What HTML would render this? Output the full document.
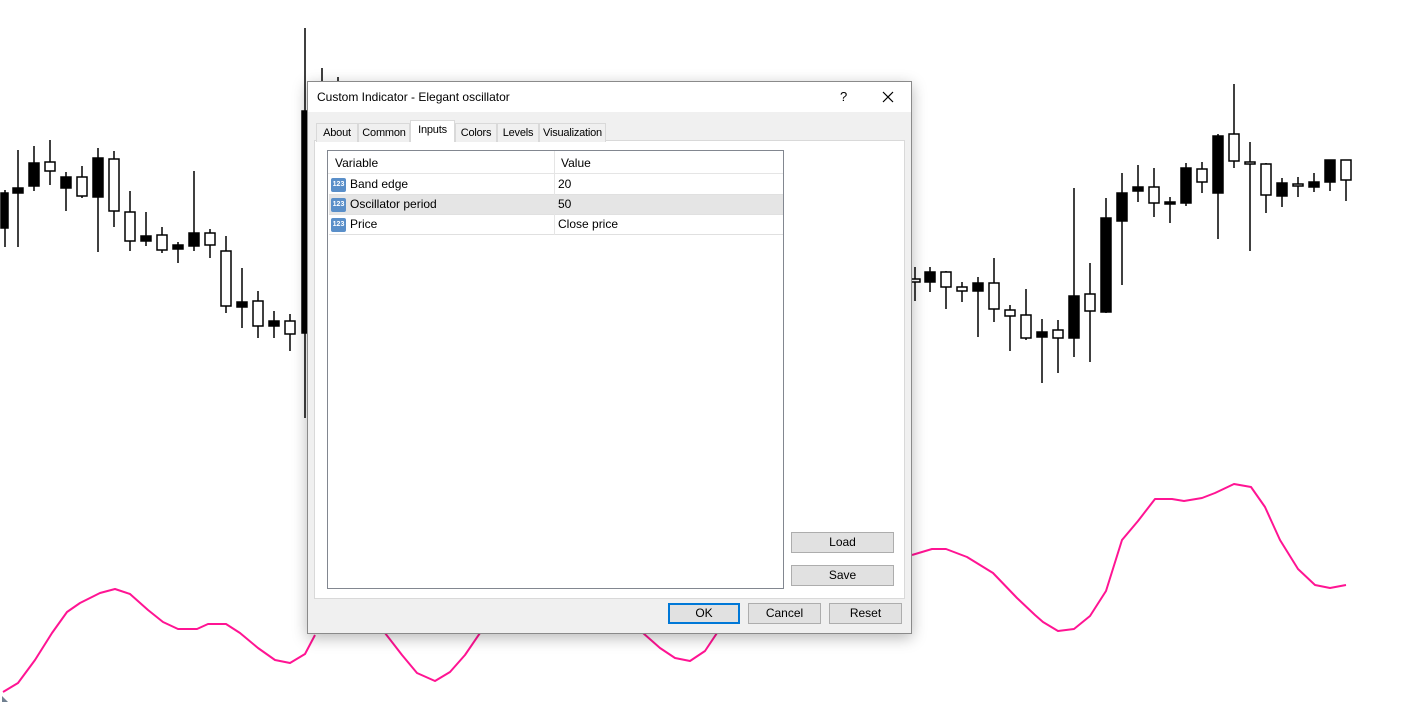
<!DOCTYPE html>
<html><head><meta charset="utf-8"><style>
*{margin:0;padding:0;box-sizing:border-box}
body{width:1401px;height:724px;background:#fff;position:relative;overflow:hidden;font-family:"Liberation Sans",sans-serif;font-size:12px;color:#000}
.abs{position:absolute}
.dlg{left:307px;top:81px;width:605px;height:553px;background:#f0f0f0;border:1px solid #8a8a8a;box-shadow:0 4px 14px rgba(0,0,0,.28)}
.title{left:0;top:0;width:603px;height:30px;background:#fff}
.tab{top:41px;height:19px;border:1px solid #d9d9d9;border-bottom:none;background:#f0f0f0;text-align:center;line-height:18px;font-size:11px;letter-spacing:-0.2px;white-space:nowrap}
.btn{background:#e1e1e1;border:1px solid #adadad;text-align:center;font-size:12px;line-height:19px}
.row{position:absolute;left:1px;width:454px;height:20px;border-bottom:1px solid #e0e0e0;line-height:19px}
.ic{position:absolute;left:2px;top:3px;width:15px;height:14px;background:#5a8fc9;border-radius:2px;color:#fff;font-size:7px;line-height:14px;text-align:center;font-weight:bold}
</style></head><body>
<svg class="abs" style="left:0;top:0" width="1401" height="724">
<g stroke="#000" stroke-width="1.5">
<line x1="5" y1="190" x2="5" y2="247"/><rect x="1" y="193" width="7" height="35" fill="#000"/>
<line x1="18" y1="150" x2="18" y2="247"/><rect x="13" y="188" width="10" height="5" fill="#000"/>
<line x1="34" y1="146" x2="34" y2="191"/><rect x="29" y="163" width="10" height="23" fill="#000"/>
<line x1="50" y1="140" x2="50" y2="185"/><rect x="45" y="162" width="10" height="9" fill="#fff"/>
<line x1="66" y1="172" x2="66" y2="211"/><rect x="61" y="177" width="10" height="11" fill="#000"/>
<line x1="82" y1="166" x2="82" y2="198"/><rect x="77" y="177" width="10" height="19" fill="#fff"/>
<line x1="98" y1="148" x2="98" y2="252"/><rect x="93" y="158" width="10" height="39" fill="#000"/>
<line x1="114" y1="151" x2="114" y2="227"/><rect x="109" y="159" width="10" height="52" fill="#fff"/>
<line x1="130" y1="191" x2="130" y2="251"/><rect x="125" y="212" width="10" height="29" fill="#fff"/>
<line x1="146" y1="212" x2="146" y2="246"/><rect x="141" y="236" width="10" height="5" fill="#000"/>
<line x1="162" y1="227" x2="162" y2="253"/><rect x="157" y="235" width="10" height="15" fill="#fff"/>
<line x1="178" y1="242" x2="178" y2="263"/><rect x="173" y="245" width="10" height="4" fill="#000"/>
<line x1="194" y1="171" x2="194" y2="251"/><rect x="189" y="233" width="10" height="13" fill="#000"/>
<line x1="210" y1="229" x2="210" y2="258"/><rect x="205" y="233" width="10" height="12" fill="#fff"/>
<line x1="226" y1="236" x2="226" y2="313"/><rect x="221" y="251" width="10" height="55" fill="#fff"/>
<line x1="242" y1="268" x2="242" y2="328"/><rect x="237" y="302" width="10" height="5" fill="#000"/>
<line x1="258" y1="291" x2="258" y2="338"/><rect x="253" y="301" width="10" height="25" fill="#fff"/>
<line x1="274" y1="311" x2="274" y2="338"/><rect x="269" y="321" width="10" height="5" fill="#000"/>
<line x1="290" y1="314" x2="290" y2="351"/><rect x="285" y="321" width="10" height="13" fill="#fff"/>
<line x1="305" y1="28" x2="305" y2="418"/><rect x="302" y="111" width="6" height="222" fill="#000"/>
<line x1="322" y1="68" x2="322" y2="82"/><line x1="338" y1="77" x2="338" y2="82"/>
<line x1="915" y1="267" x2="915" y2="301"/><rect x="910" y="279" width="10" height="3" fill="#fff"/>
<line x1="930" y1="267" x2="930" y2="292"/><rect x="925" y="272" width="10" height="10" fill="#000"/>
<line x1="946" y1="271" x2="946" y2="309"/><rect x="941" y="272" width="10" height="15" fill="#fff"/>
<line x1="962" y1="282" x2="962" y2="302"/><rect x="957" y="287" width="10" height="4" fill="#fff"/>
<line x1="978" y1="277" x2="978" y2="337"/><rect x="973" y="283" width="10" height="8" fill="#000"/>
<line x1="994" y1="258" x2="994" y2="322"/><rect x="989" y="283" width="10" height="26" fill="#fff"/>
<line x1="1010" y1="305" x2="1010" y2="351"/><rect x="1005" y="310" width="10" height="6" fill="#fff"/>
<line x1="1026" y1="289" x2="1026" y2="340"/><rect x="1021" y="315" width="10" height="23" fill="#fff"/>
<line x1="1042" y1="319" x2="1042" y2="383"/><rect x="1037" y="332" width="10" height="5" fill="#000"/>
<line x1="1058" y1="320" x2="1058" y2="373"/><rect x="1053" y="330" width="10" height="8" fill="#fff"/>
<line x1="1074" y1="188" x2="1074" y2="357"/><rect x="1069" y="296" width="10" height="42" fill="#000"/>
<line x1="1090" y1="263" x2="1090" y2="362"/><rect x="1085" y="294" width="10" height="17" fill="#fff"/>
<line x1="1106" y1="198" x2="1106" y2="313"/><rect x="1101" y="218" width="10" height="94" fill="#000"/>
<line x1="1122" y1="173" x2="1122" y2="285"/><rect x="1117" y="193" width="10" height="28" fill="#000"/>
<line x1="1138" y1="165" x2="1138" y2="202"/><rect x="1133" y="187" width="10" height="4" fill="#000"/>
<line x1="1154" y1="168" x2="1154" y2="217"/><rect x="1149" y="187" width="10" height="16" fill="#fff"/>
<line x1="1170" y1="197" x2="1170" y2="223"/><rect x="1165" y="202" width="10" height="2" fill="#000"/>
<line x1="1186" y1="163" x2="1186" y2="206"/><rect x="1181" y="168" width="10" height="35" fill="#000"/>
<line x1="1202" y1="162" x2="1202" y2="193"/><rect x="1197" y="169" width="10" height="13" fill="#fff"/>
<line x1="1218" y1="134" x2="1218" y2="239"/><rect x="1213" y="136" width="10" height="57" fill="#000"/>
<line x1="1234" y1="84" x2="1234" y2="168"/><rect x="1229" y="134" width="10" height="27" fill="#fff"/>
<line x1="1250" y1="142" x2="1250" y2="251"/><rect x="1245" y="162" width="10" height="2" fill="#fff"/>
<line x1="1266" y1="163" x2="1266" y2="213"/><rect x="1261" y="164" width="10" height="31" fill="#fff"/>
<line x1="1282" y1="178" x2="1282" y2="207"/><rect x="1277" y="183" width="10" height="13" fill="#000"/>
<line x1="1298" y1="177" x2="1298" y2="197"/><rect x="1293" y="184" width="10" height="2" fill="#fff"/>
<line x1="1314" y1="173" x2="1314" y2="192"/><rect x="1309" y="182" width="10" height="5" fill="#000"/>
<line x1="1330" y1="160" x2="1330" y2="191"/><rect x="1325" y="160" width="10" height="22" fill="#000"/>
<line x1="1346" y1="160" x2="1346" y2="201"/><rect x="1341" y="160" width="10" height="20" fill="#fff"/>
</g>
<g fill="none" stroke="#ff1493" stroke-width="2" stroke-linejoin="round">
<polyline points="3,692 18,683 35,660 52,633 67,612 80,603 100,593 115,589 130,594 148,610 163,622 178,629 197,629 208,624 226,624 240,633 258,648 275,660 290,663 305,654 315,635"/>
<polyline points="385,633 402,655 417,673 435,681 450,672 465,655 480,633"/>
<polyline points="643,633 660,648 675,658 690,661 705,651 717,633"/>
<polyline points="912,555 932,549 946,549 967,557 993,573 1017,598 1035,615 1043,622 1058,631 1074,629 1090,616 1106,591 1122,540 1138,521 1155,499 1172,499 1184,501 1202,498 1215,493 1234,484 1251,487 1265,507 1280,540 1298,569 1315,585 1330,588 1346,585"/>
</g>
<path d="M2 696 L8 702 L2 702Z" fill="#708090"/>
</svg>

<div class="abs dlg">
 <div class="abs title"><span class="abs" style="left:9px;top:8px;font-size:12px">Custom Indicator - Elegant oscillator</span>
  <span class="abs" style="left:532px;top:7px;font-size:13px">?</span>
  <svg class="abs" style="left:574px;top:9px" width="12" height="12"><path d="M1 1L11 11M11 1L1 11" stroke="#000" stroke-width="1.2"/></svg>
 </div>
 <div class="abs" style="left:6px;top:58px;width:591px;height:459px;background:#fff;border:1px solid #d9d9d9"></div>
 <div class="abs tab" style="left:8px;width:42px">About</div>
 <div class="abs tab" style="left:50px;width:52px">Common</div>
 <div class="abs tab" style="left:102px;top:38px;height:22px;width:45px;background:#fff;z-index:2;line-height:18px">Inputs</div>
 <div class="abs tab" style="left:147px;width:42px">Colors</div>
 <div class="abs tab" style="left:189px;width:42px">Levels</div>
 <div class="abs tab" style="left:231px;width:67px">Visualization</div>
 <div class="abs" style="left:19px;top:68px;width:457px;height:439px;background:#fff;border:1px solid #828790">
  <div class="abs" style="left:0;top:0;width:455px;height:23px;border-bottom:1px solid #e5e5e5"><span class="abs" style="left:7px;top:5px">Variable</span><span class="abs" style="left:233px;top:5px">Value</span><div class="abs" style="left:226px;top:0;width:1px;height:22px;background:#e5e5e5"></div></div>
  <div class="row" style="top:24px"><div class="ic">123</div><span class="abs" style="left:21px">Band edge</span><span class="abs" style="left:229px">20</span></div>
  <div class="row" style="top:44px;background:#e5e5e5"><div class="ic">123</div><span class="abs" style="left:21px">Oscillator period</span><span class="abs" style="left:229px">50</span></div>
  <div class="row" style="top:64px"><div class="ic">123</div><span class="abs" style="left:21px">Price</span><span class="abs" style="left:229px">Close price</span></div>
  <div class="abs" style="left:226px;top:23px;width:1px;height:61px;background:#e5e5e5"></div>
 </div>
 <div class="abs btn" style="left:483px;top:450px;width:103px;height:21px">Load</div>
 <div class="abs btn" style="left:483px;top:483px;width:103px;height:21px">Save</div>
 <div class="abs btn" style="left:360px;top:521px;width:72px;height:21px;border:2px solid #0078d7;line-height:17px">OK</div>
 <div class="abs btn" style="left:440px;top:521px;width:73px;height:21px">Cancel</div>
 <div class="abs btn" style="left:521px;top:521px;width:73px;height:21px">Reset</div>
</div>
</body></html>
